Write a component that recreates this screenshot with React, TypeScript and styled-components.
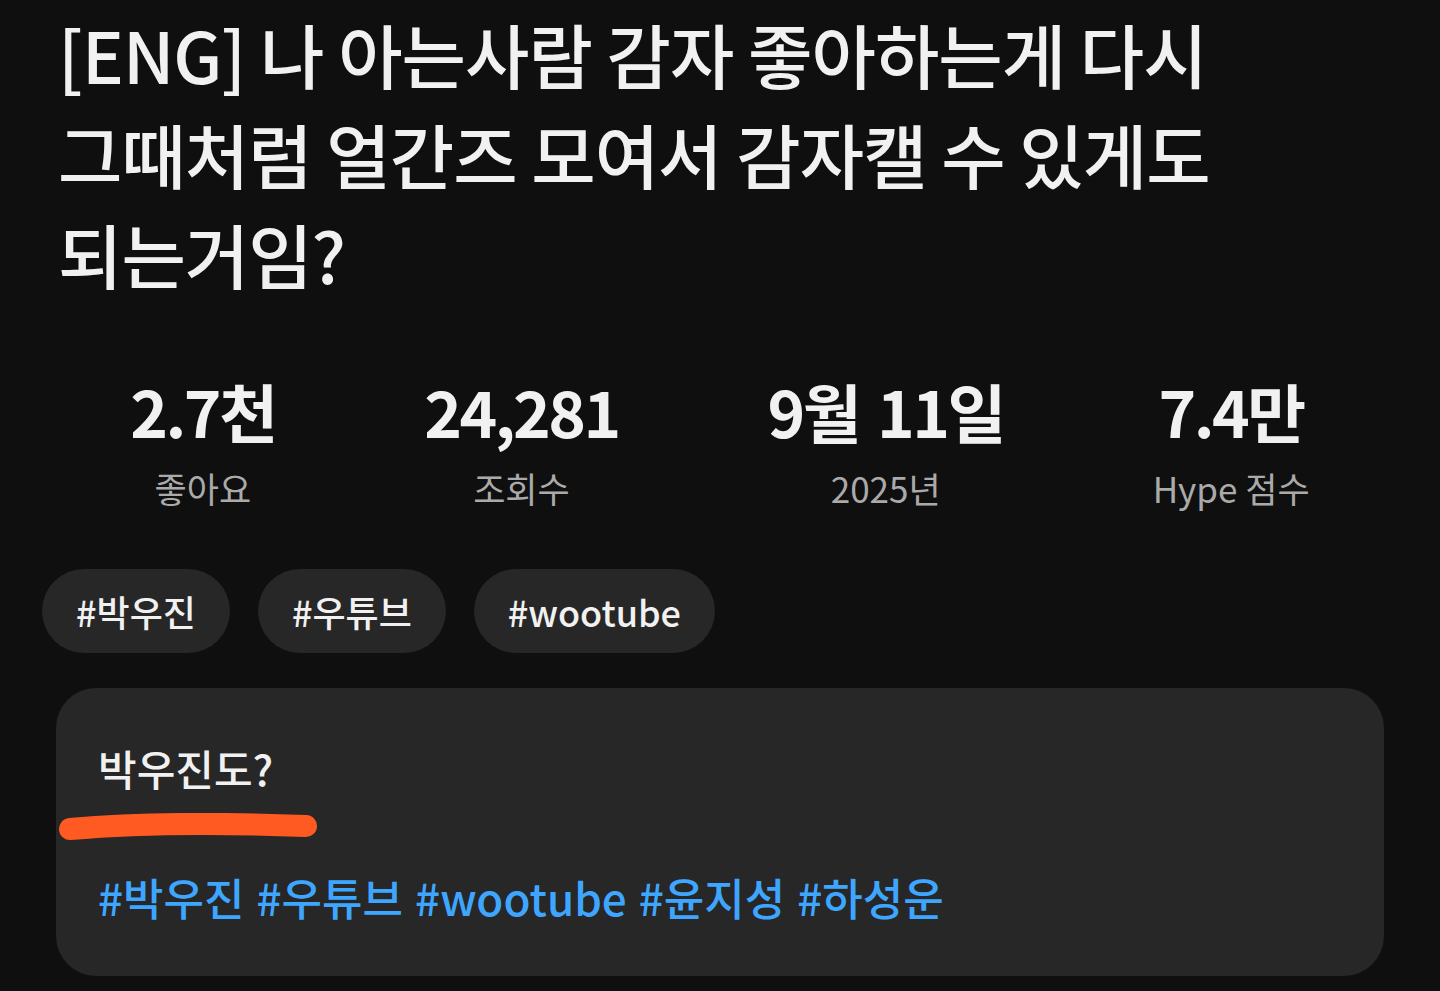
import React from "react";
import styled, { createGlobalStyle } from "styled-components";

const Global = createGlobalStyle`
  html, body {
    margin: 0;
    padding: 0;
    background: #0f0f0f;
  }
  body {
    font-family: "Noto Sans CJK KR", "Noto Sans", sans-serif;
    color: #f1f1f1;
  }
`;

const Page = styled.div`
  width: 1440px;
  height: 991px;
  box-sizing: border-box;
  padding: 4px 56px 0 56px;
  overflow: hidden;
  display: flex;
  flex-direction: column;
`;

const Title = styled.h1`
  margin: 0 0 0 2px;
  font-size: 70px;
  line-height: 100px;
  font-weight: 500;
  letter-spacing: -1px;
  word-break: keep-all;
  color: #f1f1f1;
`;

const Stats = styled.div`
  margin-top: 66px;
  display: flex;
  justify-content: space-around;
`;

const Stat = styled.div`
  display: flex;
  flex-direction: column;
  align-items: center;
`;

const StatValue = styled.div`
  font-size: 64px;
  line-height: 80px;
  font-weight: 700;
  letter-spacing: -2.5px;
  word-spacing: 6px;
  color: #f1f1f1;
`;

const StatLabel = styled.div`
  margin-top: 13px;
  font-size: 35px;
  line-height: 50px;
  font-weight: 400;
  color: #aaaaaa;
`;

const Chips = styled.div`
  margin: 56px 0 0 -14px;
  display: flex;
  gap: 28px;
`;

const Chip = styled.div`
  height: 84px;
  padding: 0 34px;
  border-radius: 42px;
  background: #272727;
  display: flex;
  align-items: center;
  font-size: 36px;
  font-weight: 500;
  color: #f1f1f1;
`;

const Card = styled.div`
  margin-top: 35px;
  border-radius: 40px;
  background: #272727;
  padding: 54px 42px 51px 42px;
  display: flex;
  flex-direction: column;
  align-items: flex-start;
`;

const CardHeading = styled.div`
  font-size: 42px;
  line-height: 52px;
  font-weight: 500;
  color: #f1f1f1;
`;

const Underline = styled.svg`
  display: block;
  margin: 19px 0 0 -40px;
`;

const Tags = styled.div`
  margin-top: 28px;
  display: flex;
  gap: 12px;
  font-size: 44px;
  line-height: 56px;
  font-weight: 500;
`;

const Tag = styled.span`
  color: #3ea6ff;
`;

const stats = [
  { value: "2.7천", label: "좋아요" },
  { value: "24,281", label: "조회수" },
  { value: "9월 11일", label: "2025년" },
  { value: "7.4만", label: "Hype 점수" },
];

export default function App() {
  return (
    <>
      <Global />
      <Page>
        <Title>
          [ENG] 나 아는사람 감자 좋아하는게 다시 그때처럼 얼간즈 모여서 감자캘 수 있게도 되는거임?
        </Title>
        <Stats>
          {stats.map((s) => (
            <Stat key={s.label}>
              <StatValue>{s.value}</StatValue>
              <StatLabel>{s.label}</StatLabel>
            </Stat>
          ))}
        </Stats>
        <Chips>
          <Chip>#박우진</Chip>
          <Chip>#우튜브</Chip>
          <Chip>#wootube</Chip>
        </Chips>
        <Card>
          <CardHeading>박우진도?</CardHeading>
          <Underline width="262" height="28" viewBox="0 0 262 28">
            <path
              d="M12 16 C 80 10, 170 10, 248 13"
              stroke="#ff5a22"
              strokeWidth="22"
              strokeLinecap="round"
              fill="none"
            />
          </Underline>
          <Tags>
            <Tag>#박우진</Tag>
            <Tag>#우튜브</Tag>
            <Tag>#wootube</Tag>
            <Tag>#윤지성</Tag>
            <Tag>#하성운</Tag>
          </Tags>
        </Card>
      </Page>
    </>
  );
}
